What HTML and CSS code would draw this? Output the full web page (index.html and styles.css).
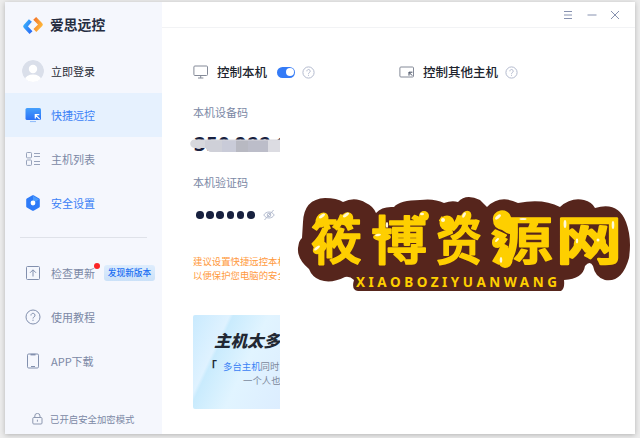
FILE: index.html
```html
<!DOCTYPE html>
<html lang="zh-CN">
<head>
<meta charset="utf-8">
<title>爱思远控</title>
<link rel="stylesheet" href="styles.css">
</head>
<body>
<div class="window">
  <aside class="sidebar">
    <div class="brand">
      <svg width="22" height="20" viewBox="0 0 22 20" fill="none" stroke-width="4" stroke-linejoin="round">
        <defs>
          <linearGradient id="bl" x1="0" y1="0" x2="1" y2="1"><stop offset="0" stop-color="#38b0fb"/><stop offset="1" stop-color="#2b6cf5"/></linearGradient>
          <linearGradient id="og" x1="0" y1="0" x2="1" y2="1"><stop offset="0" stop-color="#f4792b"/><stop offset="1" stop-color="#ffbd3c"/></linearGradient>
        </defs>
        <path d="M8.4 4.5 3.2 10.3l5.8 6.3" stroke="url(#bl)"/>
        <path d="M12.7 2.3 18.8 8.6l-5.9 5.9" stroke="url(#og)"/>
      </svg>
      <span>爱思远控</span>
    </div>
    <div class="item login">
      <svg width="22" height="22" viewBox="0 0 22 22"><defs><clipPath id="av"><circle cx="11" cy="11" r="11"/></clipPath></defs><g clip-path="url(#av)"><circle cx="11" cy="11" r="11" fill="#dadfea"/><circle cx="11" cy="9" r="4.2" fill="#fff"/><ellipse cx="11" cy="19.6" rx="8" ry="5" fill="#fff"/></g></svg>
      <span>立即登录</span>
    </div>
    <div class="item active">
      <svg width="22" height="16" viewBox="0 0 22 16"><defs><linearGradient id="mo" x1="0" y1="0" x2="0" y2="1"><stop offset="0" stop-color="#45a0fd"/><stop offset="1" stop-color="#2a70f6"/></linearGradient></defs><rect x="3.5" y="1" width="15.5" height="12" rx="1.5" fill="url(#mo)"/><path d="M8 14.6h6" stroke="#8ab9fb"/><path d="M17.7 12.2 13.3 7.8m0 3.8V7.6h4" fill="none" stroke="#fff" stroke-width="1.2"/></svg>
      <span>快捷远控</span>
    </div>
    <div class="item">
      <svg width="22" height="16" viewBox="0 0 22 16" fill="none" stroke="#98a3bb"><rect x="4.5" y="1.5" width="5" height="5.4" rx=".8"/><rect x="4.5" y="9" width="5" height="5.4" rx=".8"/><path d="M12 2.5h6M12 5.5h6M12 10.5h6M12 13.5h6"/></svg>
      <span>主机列表</span>
    </div>
    <div class="item blue">
      <svg width="22" height="16" viewBox="0 0 22 16"><path d="m11 1.4 5.6 3.2v6.8L11 14.6l-5.6-3.2V4.6z" fill="#2e7bf8" stroke="#2e7bf8" stroke-width="2.4" stroke-linejoin="round"/><path d="m11 .8 6 3.6L11 8z" fill="#4b9bfd"/><circle cx="11" cy="8" r="2.4" fill="#fff"/></svg>
      <span>安全设置</span>
    </div>
    <div class="divider"></div>
    <div class="item">
      <svg width="22" height="16" viewBox="0 0 22 16" fill="none" stroke="#8290ae"><rect x="4.5" y="1.5" width="13" height="13" rx="1"/><path d="M11 11.5V5M8 7.8l3-3 3 3"/></svg>
      <span class="update">检查更新</span>
      <em class="badge">发现新版本</em>
    </div>
    <div class="item">
      <svg width="22" height="16" viewBox="0 0 22 16" fill="none" stroke="#8290ae"><circle cx="11" cy="8" r="7"/><path d="M9 6.5a2 2 0 1 1 3.2 1.4c-.8.5-1.2.7-1.2 1.6M11 10.7v1.2"/></svg>
      <span>使用教程</span>
    </div>
    <div class="item">
      <svg width="22" height="16" viewBox="0 0 22 16" fill="none" stroke="#8290ae"><rect x="5.5" y="1" width="11" height="14" rx="1.2"/><path d="M8.5 1.6h5" stroke-width="1.6"/><path d="M9 13.5h4"/></svg>
      <span>APP下载</span>
    </div>
    <div class="secure">
      <svg width="11" height="12" viewBox="0 0 11 12" fill="none" stroke="#8d98b0"><rect x=".8" y="4.5" width="9.2" height="6.5" rx="1"/><path d="M2.8 4.5V3a2.6 2.6 0 0 1 5.2 0v1.5M5.4 6.7v2"/></svg>
      <span>已开启安全加密模式</span>
    </div>
  </aside>

  <div class="content">
    <header class="titlebar">
      <svg width="10" height="10" viewBox="0 0 10 10"><path d="M1 1.5h8M1 5h8M1 8.5h8"/></svg>
      <svg width="10" height="10" viewBox="0 0 10 10"><path d="M.5 5h9"/></svg>
      <svg width="10" height="10" viewBox="0 0 10 10"><path d="m1 1 8 8M9 1 1 9"/></svg>
    </header>
    <main class="panels">
      <section class="local">
        <h2>
          <svg class="device" width="16" height="14" viewBox="0 0 16 14"><rect x=".9" y="1" width="13.6" height="9.5" rx="1"/><path d="M7.7 10.5V13M5 13h5.4"/></svg>
          <span>控制本机</span>
          <i class="toggle"></i>
          <svg class="help" width="13" height="13" viewBox="0 0 13 13"><circle cx="6.5" cy="6.5" r="5.6"/><path d="M4.9 5.3a1.65 1.65 0 1 1 2.6 1.2c-.7.4-1 .6-1 1.3M6.5 8.8v1"/></svg>
        </h2>
        <p class="label">本机设备码</p>
        <div class="code"><b>350 988 1</b>
          <svg class="mosaic" width="90" height="14" viewBox="0 0 90 14"><path d="M4 .5h87V13H22q-4 0-6-4H5A4.2 4.2 0 0 1 4 .5" fill="#d7d8dd"/><path d="M15 1.5h17V13H22q-4 0-7-5z" fill="#cfd0d8"/><path d="M32 1.5h14V13H32z" fill="#c9cbd8"/><path d="M46 1.5h12V13H46z" fill="#b8b9c2"/><path d="M58 1.5h20V13H58z" fill="#bcbdc9"/><path d="M78 1.5h13V13H78z" fill="#dcdce2"/></svg>
        </div>
        <p class="label">本机验证码</p>
        <div class="password">
          <i></i><i></i><i></i><i></i><i></i><i></i>
          <svg width="12" height="12" viewBox="0 0 12 12"><path d="M.8 6C3 2 9 2 11.2 6 9 10 3 10 .8 6z"/><circle cx="6" cy="6" r="1.8"/><path d="M10.6 1 1.5 11"/></svg>
        </div>
        <div class="tip">建议设置快捷远控本机<br>以便保护您电脑的安全</div>
        <div class="banner">
          <strong>主机太多</strong>
          <p class="line"><b>「</b><em>多台主机</em>同时</p>
          <p class="line second">一个人也</p>
        </div>
      </section>
      <section class="remote">
        <h2>
          <svg class="device" width="16" height="14" viewBox="0 0 16 14"><rect x=".9" y="2" width="13.6" height="10" rx="1"/><path d="M13.2 10.6 10 7.4m0 3.2V7.2h3.4" stroke="#414a5e"/></svg>
          <span>控制其他主机</span>
          <svg class="help" width="13" height="13" viewBox="0 0 13 13"><circle cx="6.5" cy="6.5" r="5.6"/><path d="M4.9 5.3a1.65 1.65 0 1 1 2.6 1.2c-.7.4-1 .6-1 1.3M6.5 8.8v1"/></svg>
        </h2>
      </section>
    </main>
  </div>
</div>

<svg class="watermark" width="340" height="100" viewBox="296 196 340 100">
  <path class="plate" d="M303 222Q304 199 325 198Q337 198 343 202Q355 196 366 203Q373 206 376 213Q382 206 394 207Q400 200 420 200Q434 198 444 203Q452 200 458 202Q466 193 480 200L487 207Q500 194 518 203Q543 198 560 207Q571 197 584 200Q592 202 595 208Q618 201 626 222Q632 238 629 258Q622 283 605 280Q595 277 593 266Q590 260 585 266Q583 279 564 280Q565 289 561 291H358Q351 290 354 280Q350 276 345 277Q331 284 320 280Q312 277 309 269Q297 259 298 248Q299 240 302 238Z"/>
  <g class="hanzi">
    <text x="311" y="260" textLength="51" lengthAdjust="spacingAndGlyphs">筱</text>
    <text x="371" y="260" textLength="56" lengthAdjust="spacingAndGlyphs">博</text>
    <text x="436" y="260" textLength="46" lengthAdjust="spacingAndGlyphs">资</text>
    <text x="490" y="260" textLength="63" lengthAdjust="spacingAndGlyphs">源</text>
    <text class="net" x="556" y="260" textLength="66" lengthAdjust="spacingAndGlyphs">网</text>
  </g>
  <g class="drops">
    <circle cx="447" cy="223" r="7.5"/><circle cx="424" cy="216" r="5"/>
    <ellipse cx="322" cy="220" rx="6" ry="8" transform="rotate(30 322 220)"/><ellipse cx="347" cy="219" rx="6" ry="7" transform="rotate(30 347 219)"/>
    <ellipse cx="320" cy="248" rx="8" ry="5" transform="rotate(-35 320 248)"/><ellipse cx="466" cy="217" rx="5" ry="6.5" transform="rotate(30 466 217)"/>
    <ellipse cx="382" cy="237" rx="9" ry="4"/>
    <path d="M493 220a9 8 0 0 1 18-3q4 8 2 18-6-1-11-5-9-2-9-10M492 243q0-8 8-8l8 4q-5 8-10 9-6 0-6-5M498 261q-1-6 4-8l6-6q6 10 4 16-2 5-7 5-6-1-7-7"/>
    <ellipse cx="579" cy="243" rx="5" ry="7" transform="rotate(20 579 243)"/><ellipse cx="600" cy="242" rx="6" ry="6.5"/>
  </g>
  <g class="shine">
    <ellipse cx="322" cy="216" rx="3.5" ry="1.4" transform="rotate(-35 322 216)"/><ellipse cx="346" cy="215" rx="3.5" ry="1.4" transform="rotate(-35 346 215)"/><ellipse cx="317" cy="248" rx="3.5" ry="1.4" transform="rotate(-40 317 248)"/><ellipse cx="378" cy="235" rx="3" ry="1.2" transform="rotate(-10 378 235)"/><ellipse cx="387" cy="225" rx="1.2" ry="3"/><ellipse cx="422" cy="214" rx="2" ry="1.3"/><circle cx="443" cy="220" r="2"/><ellipse cx="464" cy="215" rx="1.4" ry="3" transform="rotate(30 464 215)"/><ellipse cx="498" cy="217" rx="3.5" ry="1.5" transform="rotate(-40 498 217)"/><ellipse cx="497" cy="240" rx="2.5" ry="1.2" transform="rotate(-45 497 240)"/><ellipse cx="501" cy="260" rx="1.3" ry="3"/><ellipse cx="523" cy="219" rx="3.5" ry="1.1"/><ellipse cx="565" cy="224" rx="1.4" ry="4"/><ellipse cx="613" cy="225" rx="1.3" ry="4"/><ellipse cx="577" cy="241" rx="1.2" ry="2.4"/><circle cx="598" cy="240" r="1.5"/>
  </g>
  <text class="pinyin" x="356" y="287" textLength="201">XIAOBOZIYUANWANG</text>
</svg>
</body>
</html>
```
FILE: styles.css
```css
* { box-sizing: border-box; margin: 0; padding: 0; }
body {
  width: 640px;
  height: 438px;
  padding: 2px 5px 4px;
  overflow: hidden;
  background: #ececec;
  font: 11px/16px "Noto Sans CJK SC", sans-serif;
  color: #7b88a5;
}
svg { display: block; flex: none; }
i, em { font-style: normal; }
.window {
  display: flex;
  width: 630px;
  height: 432px;
  background: #fff;
  box-shadow: 0 1px 5px rgba(0, 0, 0, .24);
}
.sidebar { display: flex; flex-direction: column; width: 157px; background: #f5f7fd; }
.brand {
  display: flex;
  align-items: center;
  gap: 6px;
  height: 47px;
  padding-left: 17px;
  color: #252d41;
  font-size: 13.8px;
  font-weight: 700;
}
.brand span { margin-top: -3px; }
.item { display: flex; align-items: center; gap: 7px; height: 44px; padding-left: 17px; white-space: nowrap; }
.login { color: #272b35; }
.active { background: #e6f1fe; }
.active, .blue { color: #3a80f6; }
.divider { height: 1px; margin: 12px 15px 13px; background: #dfe2e9; }
.update { position: relative; }
.update::after {
  content: "";
  position: absolute;
  top: -2px;
  right: -5px;
  width: 6px;
  height: 6px;
  border-radius: 50%;
  background: #fb2527;
}
.badge {
  width: 51px;
  height: 16px;
  margin-left: 2px;
  border-radius: 3px;
  background: linear-gradient(#deedfd, #cbe1f8);
  color: #1b6ff2;
  font-size: 8.7px;
  font-weight: 500;
  line-height: 16px;
  text-align: center;
}
.secure {
  display: flex;
  align-items: center;
  gap: 7px;
  margin-top: 28px;
  padding-left: 27px;
  font-size: 9.4px;
  white-space: nowrap;
}
.content { flex: 1; }
.titlebar {
  display: flex;
  align-items: center;
  justify-content: flex-end;
  gap: 13.5px;
  height: 26px;
  padding-right: 15px;
  border-bottom: 1px solid #f2f3f5;
}
.titlebar svg { fill: none; stroke: #8792b0; }
.panels { display: grid; grid-template-columns: 206px 1fr; padding: 34px 0 0 31px; }
h2 { display: flex; align-items: center; height: 20px; color: #20242e; font-size: 12.5px; font-weight: 500; white-space: nowrap; }
h2 span { margin-left: 8px; }
.device { fill: none; stroke: #848a98; }
.help { margin-left: 7px; fill: none; stroke: #b3bace; }
.toggle {
  display: flex;
  justify-content: flex-end;
  width: 18px;
  height: 11px;
  margin-left: 10px;
  padding: 1.5px;
  border-radius: 6px;
  background: #347bf7;
}
.toggle::after { content: ""; width: 8px; height: 8px; border-radius: 50%; background: #fff; }
.label { margin-top: 22px; }
.code { position: relative; width: 87px; height: 32px; padding-top: 13px; }
.code b {
  display: block;
  height: 19px;
  padding-left: 1px;
  overflow: hidden;
  color: #18213f;
  font: 700 20px/21px "Open Sans", sans-serif;
  letter-spacing: .7px;
  word-spacing: -1.5px;
  white-space: nowrap;
}
.mosaic { position: absolute; left: -3px; top: 19px; }
.code + .label { margin-top: 22px; }
.password { display: flex; align-items: center; gap: 2.6px; height: 20px; margin-top: 15px; padding-left: 3px; }
.password i { width: 7.6px; height: 7.6px; border-radius: 50%; background: #18213f; }
.password svg { margin-left: 6px; fill: none; stroke: #b4bccf; }
.tip { width: 87px; margin-top: 30px; overflow: hidden; color: #ff9a3e; font-size: 9.4px; line-height: 13.5px; white-space: nowrap; }
.banner {
  width: 87px;
  height: 94px;
  margin-top: 33px;
  padding-top: 14px;
  overflow: hidden;
  border-radius: 2px 0 0 2px;
  background: linear-gradient(115deg, #c9eafe 0, #dff2ff 28%, #c9ebfd 31%, #e1f4ff 58%, #dcedff 100%);
  white-space: nowrap;
}
.banner strong { display: block; padding-left: 21px; color: #222833; font-size: 16.5px; font-style: italic; font-weight: 900; line-height: 22px; }
.line { display: flex; height: 14px; margin-top: 8px; font-size: 9.4px; line-height: 14px; color: #7b879b; }
.line b { width: 30px; padding-left: 12px; color: #222833; font-size: 12px; line-height: 14px; }
.line em { color: #3b82f5; }
.second { margin-top: 0; padding-left: 50px; }
.watermark { position: absolute; left: 296px; top: 196px; }
.plate { fill: #56251c; }
.hanzi {
  fill: #fecf00;
  stroke: #fecf00;
  stroke-width: 1.6;
  stroke-linejoin: round;
  font: 500 52px "Noto Sans CJK SC", sans-serif;
}
.net { stroke-width: 2.4; }
.drops { fill: #fecf00; }
.shine { fill: #fff9d8; }
.pinyin { fill: #fecf00; font: 700 13.5px "Noto Sans", sans-serif; }
```
